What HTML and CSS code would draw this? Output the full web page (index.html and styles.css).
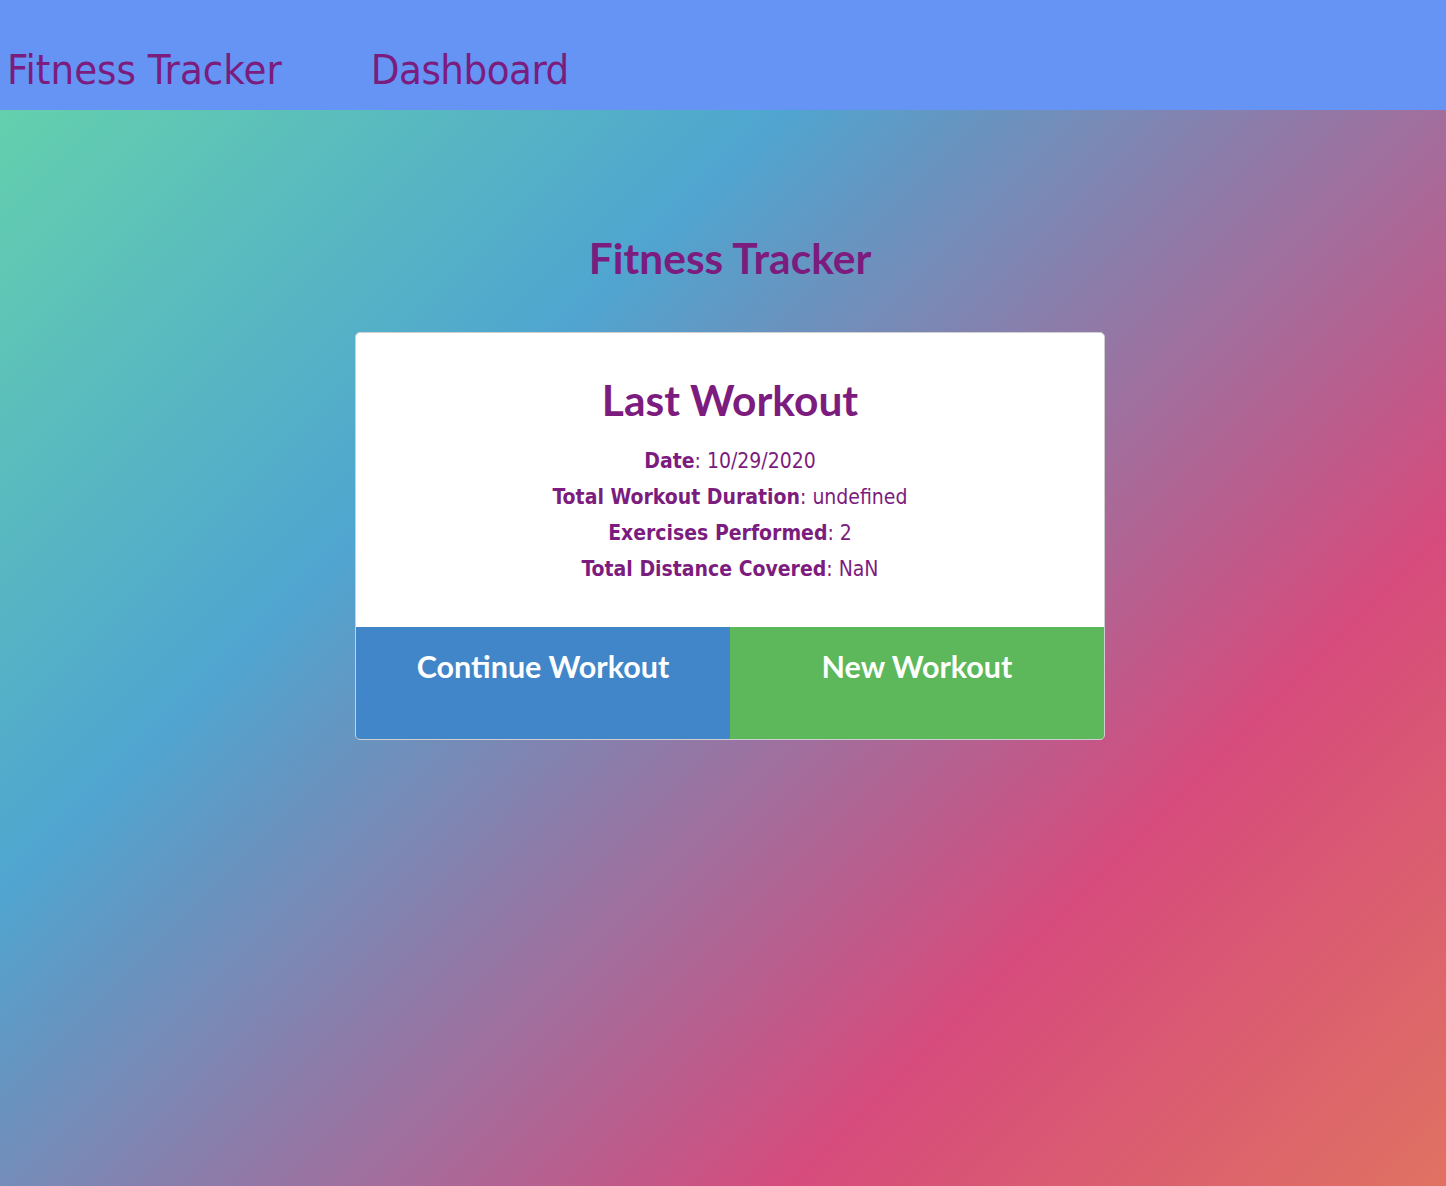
FILE: index.html
```html
<!DOCTYPE html>
<html lang="en">
<head>
<meta charset="utf-8">
<title>Fitness Tracker</title>
<link rel="stylesheet" href="styles.css">
</head>
<body>
<nav class="topnav">
  <a class="nav-link brand" href="#">Fitness Tracker</a>
  <a class="nav-link" href="#">Dashboard</a>
</nav>
<main class="page">
  <h1 class="page-title">Fitness Tracker</h1>
  <section class="card">
    <div class="card-body">
      <h2 class="card-title">Last Workout</h2>
      <p class="stat"><strong>Date</strong>: 10/29/2020</p>
      <p class="stat"><strong>Total Workout Duration</strong>: undefined</p>
      <p class="stat"><strong>Exercises Performed</strong>: 2</p>
      <p class="stat"><strong>Total Distance Covered</strong>: NaN</p>
    </div>
    <div class="card-actions">
      <a class="btn btn-continue" href="#">Continue Workout</a>
      <a class="btn btn-new" href="#">New Workout</a>
    </div>
  </section>
</main>
</body>
</html>
```

FILE: styles.css
```css
html, body {
  margin: 0;
  padding: 0;
}

body {
  font-family: "DejaVu Sans Condensed", "DejaVu Sans", sans-serif;
  color: #7b1c7e;
}

.topnav {
  height: 110px;
  box-sizing: border-box;
  background: #6594f4;
  display: flex;
  align-items: flex-end;
  padding: 0 0 16px 7px;
  gap: 89px;
}

.nav-link {
  font-family: "DejaVu Sans Condensed", "DejaVu Sans", sans-serif;
  font-size: 41.5px;
  line-height: 48px;
  color: #7b1c7e;
  text-decoration: none;
}

.nav-link + .nav-link {
  letter-spacing: -0.5px;
}

.page {
  min-height: 1076px;
  background: linear-gradient(135deg, #64d0ad 0%, #4fa5d0 31%, #d64b7c 74%, #e07262 100%);
  display: flex;
  flex-direction: column;
  align-items: center;
  padding: 1px 0 0 14px;
  box-sizing: border-box;
}

.page-title {
  font-family: Lato, sans-serif;
  font-weight: 700;
  font-size: 42.5px;
  line-height: 50px;
  margin: 122px 0 0;
  color: #7b1c7e;
}

.card {
  margin-top: 49px;
  width: 750px;
  box-sizing: border-box;
  background: #fff;
  border: 1px solid #cfcfcf;
  border-radius: 5px;
  overflow: hidden;
}

.card-body {
  padding: 40px 0 40px;
  text-align: center;
}

.card-title {
  font-family: Lato, sans-serif;
  font-weight: 700;
  font-size: 42.5px;
  line-height: 54px;
  margin: 0 0 16px;
  color: #7b1c7e;
}

.stat {
  margin: 0;
  font-size: 21px;
  line-height: 36px;
  color: #7b1c7e;
}

.stat strong {
  font-weight: 700;
}

.card-actions {
  display: flex;
}

.btn {
  flex: 1;
  height: 112px;
  box-sizing: border-box;
  padding-top: 19px;
  text-align: center;
  font-family: Lato, sans-serif;
  font-weight: 700;
  font-size: 30.5px;
  line-height: 40px;
  color: #fff;
  text-decoration: none;
}

.btn-continue {
  background: #4186c9;
}

.btn-new {
  background: #5cb85a;
}
```
